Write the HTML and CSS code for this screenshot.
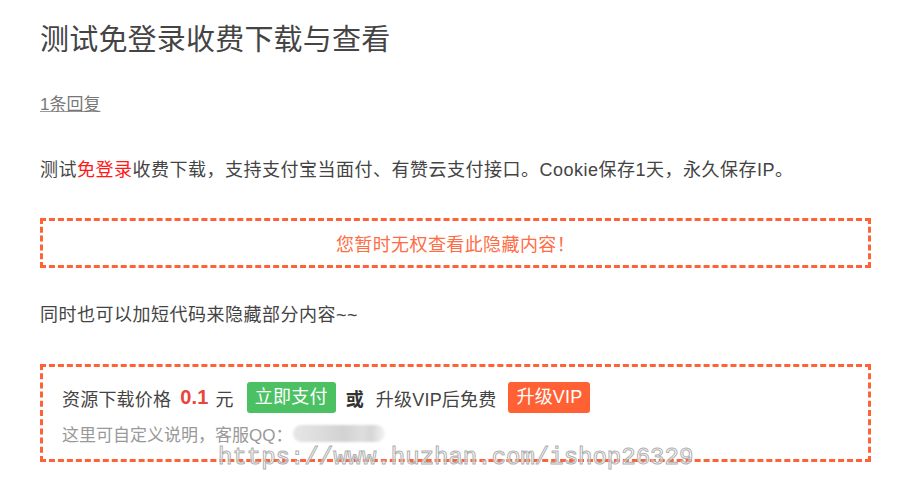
FILE: index.html
```html
<!DOCTYPE html>
<html lang="zh-CN">
<head>
<meta charset="utf-8">
<title>测试免登录收费下载与查看</title>
<link rel="stylesheet" href="styles.css">
</head>
<body>
<div class="page">
  <h1 class="title">测试免登录收费下载与查看</h1>
  <a class="replies" href="#">1条回复</a>
  <p class="text text-first">测试<span class="hl">免登录</span>收费下载，支持支付宝当面付、有赞云支付接口。Cookie保存1天，永久保存IP。</p>
  <div class="hidden-box">您暂时无权查看此隐藏内容！</div>
  <p class="text text-second">同时也可以加短代码来隐藏部分内容~~</p>
  <div class="pay-box">
    <div class="pay-row">
      <span class="label">资源下载价格</span>
      <span class="price">0.1</span>
      <span class="unit">元</span>
      <span class="btn btn-pay">立即支付</span>
      <span class="or">或</span>
      <span class="label">升级VIP后免费</span>
      <span class="btn btn-vip">升级VIP</span>
    </div>
    <div class="note-row">
      <span class="note">这里可自定义说明，客服QQ：</span>
      <span class="qq-blur"></span>
    </div>
  </div>
</div>
<div class="watermark">https://www.huzhan.com/ishop26329</div>
</body>
</html>
```
FILE: styles.css
```css
html, body {
  margin: 0;
  padding: 0;
  background: #fff;
}
body {
  font-family: "Liberation Sans", "Noto Sans CJK SC", sans-serif;
  color: #444;
  position: relative;
  width: 900px;
  height: 495px;
  overflow: hidden;
}
.page {
  width: 831px;
  padding: 20px 0 0 40px;
  display: flex;
  flex-direction: column;
  align-items: flex-start;
}
.title {
  margin: 0;
  font-size: 29px;
  line-height: 40px;
  font-weight: normal;
  letter-spacing: 0.2px;
  color: #444;
}
.replies {
  margin-top: 35px;
  font-size: 17px;
  line-height: 20px;
  color: #777;
  text-decoration: underline;
  text-decoration-color: #999;
}
.text {
  margin: 0;
  font-size: 18px;
  line-height: 30px;
  letter-spacing: 0.5px;
  color: #444;
}
.text-first {
  margin-top: 40px;
}
.hl {
  color: #ff1a1a;
}
.hidden-box {
  margin-top: 33px;
  box-sizing: border-box;
  width: 831px;
  height: 50px;
  border: 3px dashed #ff6236;
  display: flex;
  align-items: center;
  justify-content: center;
  font-size: 18px;
  letter-spacing: 0.4px;
  color: #ff6d45;
}
.text-second {
  margin-top: 32px;
}
.pay-box {
  margin-top: 34px;
  box-sizing: border-box;
  width: 831px;
  height: 98px;
  border: 3px dashed #ff6236;
  padding: 15px 0 0 19px;
  display: flex;
  flex-direction: column;
}
.pay-row {
  display: flex;
  align-items: center;
  height: 31px;
  font-size: 18px;
  letter-spacing: 0.2px;
  color: #444;
}
.price {
  margin-left: 9px;
  font-size: 20px;
  font-weight: bold;
  color: #e8453c;
}
.unit {
  margin-left: 7px;
}
.btn {
  height: 31px;
  line-height: 31px;
  padding: 0 8px;
  border-radius: 3px;
  color: #fff;
  font-size: 18px;
}
.btn-pay {
  margin-left: 13px;
  background: #4cc163;
}
.or {
  margin-left: 10px;
  margin-right: 12px;
  font-weight: bold;
  color: #333;
}
.btn-vip {
  margin-left: 12px;
  background: #ff6135;
}
.note-row {
  margin-top: 8px;
  display: flex;
  align-items: center;
  height: 24px;
}
.note {
  font-size: 17px;
  color: #999;
}
.qq-blur {
  margin-left: 1px;
  width: 92px;
  height: 17px;
  border-radius: 9px;
  background: linear-gradient(90deg, #e6e6e6 0%, #dcdcdc 30%, #d2d2d2 55%, #dedede 75%, #d6d6d6 85%, #f4f4f4 100%);
  filter: blur(1px);
}
.watermark {
  position: absolute;
  left: 218px;
  top: 444px;
  font-family: "Liberation Mono", monospace;
  font-size: 24px;
  line-height: 28px;
  color: rgba(255, 255, 255, 0.55);
  -webkit-text-stroke: 1px #b0b0b0;
  white-space: nowrap;
}
```
